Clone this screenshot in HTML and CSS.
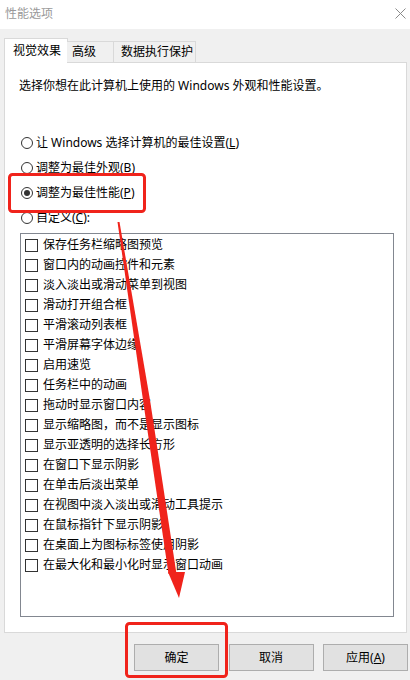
FILE: index.html
```html
<!DOCTYPE html>
<html lang="zh-CN">
<head>
<meta charset="utf-8">
<title>性能选项</title>
<link rel="stylesheet" href="styles.css">
</head>
<body>
<div class="window">
  <div class="titlebar">
    <span class="title">性能选项</span>
    <svg class="close" width="11" height="11" viewBox="0 0 11 11"><path d="M0.5 0.5 L10.5 10.5 M10.5 0.5 L0.5 10.5" stroke="#8a8a8a" stroke-width="1" fill="none"/></svg>
  </div>
  <div class="tabs">
    <div class="tab tab-active tab-visual">视觉效果</div>
    <div class="tab tab-adv">高级</div>
    <div class="tab tab-dep">数据执行保护</div>
  </div>
  <div class="panel">
    <p class="desc">选择你想在此计算机上使用的 Windows 外观和性能设置。</p>
    <div class="radios">
      <div class="radio-row"><span class="radio"></span><span>让 Windows 选择计算机的最佳设置(<u>L</u>)</span></div>
      <div class="radio-row"><span class="radio"></span><span>调整为最佳外观(<u>B</u>)</span></div>
      <div class="radio-row"><span class="radio radio-on"></span><span>调整为最佳性能(<u>P</u>)</span></div>
      <div class="radio-row"><span class="radio"></span><span>自定义(<u>C</u>):</span></div>
    </div>
    <div class="listbox">
      <div class="item"><span class="check"></span>保存任务栏缩略图预览</div>
      <div class="item"><span class="check"></span>窗口内的动画控件和元素</div>
      <div class="item"><span class="check"></span>淡入淡出或滑动菜单到视图</div>
      <div class="item"><span class="check"></span>滑动打开组合框</div>
      <div class="item"><span class="check"></span>平滑滚动列表框</div>
      <div class="item"><span class="check"></span>平滑屏幕字体边缘</div>
      <div class="item"><span class="check"></span>启用速览</div>
      <div class="item"><span class="check"></span>任务栏中的动画</div>
      <div class="item"><span class="check"></span>拖动时显示窗口内容</div>
      <div class="item"><span class="check"></span>显示缩略图，而不是显示图标</div>
      <div class="item"><span class="check"></span>显示亚透明的选择长方形</div>
      <div class="item"><span class="check"></span>在窗口下显示阴影</div>
      <div class="item"><span class="check"></span>在单击后淡出菜单</div>
      <div class="item"><span class="check"></span>在视图中淡入淡出或滑动工具提示</div>
      <div class="item"><span class="check"></span>在鼠标指针下显示阴影</div>
      <div class="item"><span class="check"></span>在桌面上为图标标签使用阴影</div>
      <div class="item"><span class="check"></span>在最大化和最小化时显示窗口动画</div>
    </div>
  </div>
  <div class="buttons">
    <div class="btn">确定</div>
    <div class="btn">取消</div>
    <div class="btn">应用(<u>A</u>)</div>
  </div>
</div>
<svg class="annot" width="410" height="680" viewBox="0 0 410 680">
  <rect x="9.5" y="174.5" width="135" height="37" rx="3" fill="none" stroke="#f0231b" stroke-width="3"/>
  <rect x="126.5" y="623.5" width="100" height="53" rx="3" fill="none" stroke="#f0231b" stroke-width="3"/>
  <polygon points="117.5,222 119.5,222 150,400 176.5,574 168.5,574 143,400" fill="#f0231b"/>
  <polygon points="168,572 185,572 179,598" fill="#f0231b"/>
</svg>
</body>
</html>
```
FILE: styles.css
```css
* { box-sizing: border-box; }
html, body { margin: 0; padding: 0; }
body {
  width: 410px;
  height: 680px;
  background: #f0f0f0;
  font-family: "Noto Sans", "Noto Sans CJK SC", sans-serif;
  font-size: 12px;
  color: #000;
  position: relative;
  overflow: hidden;
}
u { text-decoration: underline; text-underline-offset: 1px; }
.window { width: 410px; height: 680px; }

.titlebar {
  height: 29px;
  background: #fff;
  display: flex;
  align-items: center;
  justify-content: space-between;
  padding: 0 4px 2px 5px;
}
.title { color: #999; line-height: 16px; }
.close { display: block; }

.tabs {
  display: flex;
  align-items: flex-start;
  margin-top: 9px;
  padding-left: 4px;
  height: 24px;
  position: relative;
  z-index: 2;
}
.tab {
  border: 1px solid #d9d9d9;
  border-bottom: none;
  background: #f0f0f0;
  margin-top: 3px;
  height: 21px;
  line-height: 19px;
  white-space: nowrap;
}
.tab-active {
  background: #fff;
  margin-top: 0;
  height: 25px;
  line-height: 24px;
}
.tab-visual { width: 64px; padding-left: 8px; }
.tab-adv { width: 47px; padding-left: 5px; margin-left: -1px; border-left: none; }
.tab-dep { width: 83px; padding-left: 7px; margin-left: -1px; }

.panel {
  margin-left: 4px;
  width: 403px;
  height: 571px;
  background: #fff;
  border: 1px solid #d9d9d9;
  padding-left: 14px;
  position: relative;
  z-index: 1;
}
.desc {
  margin: 15px 0 0 0;
  line-height: 16px;
}
.radios { margin-top: 36px; margin-left: 2px; }
.radio-row {
  height: 25px;
  display: flex;
  align-items: center;
  gap: 3px;
  line-height: 16px;
}
.radio {
  width: 12px;
  height: 12px;
  border: 1px solid #333;
  border-radius: 50%;
  background: #fff;
  display: flex;
  align-items: center;
  justify-content: center;
  flex: none;
}
.radio-on::after {
  content: "";
  width: 6px;
  height: 6px;
  border-radius: 50%;
  background: #333;
}

.listbox {
  margin-top: 3px;
  margin-left: 1px;
  width: 374px;
  height: 384px;
  border: 1px solid #828790;
  padding: 1px 0 0 4px;
}
.item {
  height: 20px;
  display: flex;
  align-items: center;
  line-height: 16px;
  white-space: nowrap;
}
.check {
  width: 13px;
  height: 13px;
  border: 1px solid #333;
  background: #fff;
  margin-right: 5px;
  flex: none;
}

.buttons {
  display: flex;
  gap: 9.5px;
  padding-left: 134px;
  margin-top: 11px;
}
.btn {
  width: 85px;
  height: 27px;
  background: #e1e1e1;
  border: 1px solid #adadad;
  display: flex;
  align-items: center;
  justify-content: center;
  line-height: 16px;
}

.annot {
  position: absolute;
  left: 0;
  top: 0;
  pointer-events: none;
  z-index: 5;
}
```
